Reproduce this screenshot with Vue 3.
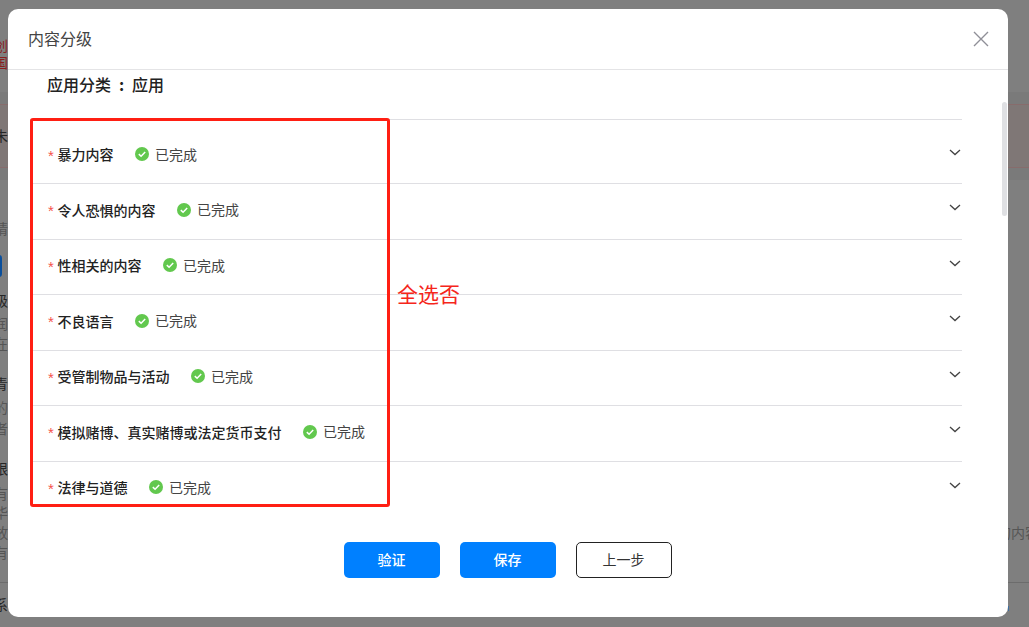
<script setup>
const rows = [
  '暴力内容',
  '令人恐惧的内容',
  '性相关的内容',
  '不良语言',
  '受管制物品与活动',
  '模拟赌博、真实赌博或法定货币支付',
  '法律与道德'
]
const leftBits = [
  { t: '业创', x: -20, y: 37, c: 'red' },
  { t: '国', x: -6, y: 54, c: 'red' },
  { t: '未', x: -6, y: 127, c: 'ink' },
  { t: '请', x: -6, y: 220, c: 'dim' },
  { t: '级', x: -6, y: 292, c: 'ink' },
  { t: '润', x: -6, y: 315, c: 'dim' },
  { t: '在', x: -6, y: 335, c: 'dim' },
  { t: '青', x: -6, y: 375, c: 'ink' },
  { t: '的', x: -6, y: 399, c: 'dim' },
  { t: '者', x: -6, y: 420, c: 'dim' },
  { t: '限', x: -6, y: 460, c: 'ink' },
  { t: '有', x: -6, y: 485, c: 'dim' },
  { t: '华', x: -6, y: 504, c: 'dim' },
  { t: '放', x: -6, y: 524, c: 'dim' },
  { t: '有', x: -6, y: 544, c: 'dim' },
  { t: '系', x: -6, y: 596, c: 'ink' }
]
</script>

<template>
  <div class="page">
    <div class="backdrop">
      <div class="band"></div>
      <div class="rule"></div>
      <span
        v-for="b in leftBits"
        :key="b.t + b.y"
        class="bit"
        :class="b.c"
        :style="{ left: b.x + 'px', top: b.y + 'px' }"
      >{{ b.t }}</span>
      <span class="chip"></span>
      <span class="bit dim right-bit">的内容</span>
      <span class="dots"></span>
    </div>

    <section class="modal">
      <header class="modal-head">
        <h2>内容分级</h2>
        <svg class="close" width="16" height="16" viewBox="0 0 16 16">
          <path d="M1 1 L15 15 M15 1 L1 15" stroke="#8f8f97" stroke-width="1.4" fill="none" />
        </svg>
      </header>

      <div class="modal-body">
        <div class="scroll">
          <p class="category">应用分类<span class="colon">:</span>应用</p>
          <ul class="list">
            <li v-for="(r, i) in rows" :key="r" class="row" :class="{ first: i === 0 }">
              <span class="star">*</span>
              <span class="label">{{ r }}</span>
              <svg class="ok" width="14" height="14" viewBox="0 0 14 14">
                <circle cx="7" cy="7" r="7" fill="#62c84e" />
                <path d="M3.8 7.1 L6.1 9.3 L10.2 5.1" stroke="#fff" stroke-width="1.5" fill="none" />
              </svg>
              <span class="done">已完成</span>
              <svg class="chev" width="12" height="7" viewBox="0 0 12 7">
                <path d="M1 1 L6 5.6 L11 1" stroke="#444" stroke-width="1.3" fill="none" />
              </svg>
            </li>
          </ul>
        </div>
        <div class="thumb"></div>
      </div>

      <footer class="modal-foot">
        <button class="btn primary">验证</button>
        <button class="btn primary">保存</button>
        <button class="btn ghost">上一步</button>
      </footer>
    </section>

    <div class="mark"></div>
    <span class="mark-text">全选否</span>
  </div>
</template>

<style>
html, body { margin: 0; padding: 0; background: #7f7f7f; }
</style>

<style scoped>
.page {
  position: relative;
  width: 1029px;
  height: 627px;
  overflow: hidden;
  font-family: "Noto Sans CJK SC", "Noto Sans", sans-serif;
  background: #7f7f7f;
}
.backdrop { position: absolute; inset: 0; }
.band {
  position: absolute;
  left: 0; right: 0; top: 92px; height: 88px;
  background: #7a7a7a;
}
.band::before {
  content: "";
  position: absolute;
  left: 0; right: 0; top: 12px; height: 62px;
  background: #7f7776;
  border-top: 1px solid #876c6c;
  border-bottom: 1px solid #876c6c;
}
.rule {
  position: absolute;
  left: 0; right: 0; top: 582px; height: 1px;
  background: #6c6c6c;
}
.bit { position: absolute; font-size: 14px; line-height: 14px; margin-top: 1px; white-space: nowrap; }
.red { color: #8a1f1f; }
.ink { color: #262626; }
.dim { color: #555; }
.chip {
  position: absolute;
  left: -6px; top: 255px;
  width: 8px; height: 22px;
  border-radius: 3px;
  background: #0a4f9c;
}
.right-bit { left: 997px; top: 524px; }
.dots {
  position: absolute;
  left: 1008px; top: 606px;
  width: 1px; height: 5px;
  background: #3f6f9f;
}

.modal {
  position: relative;
  margin: 9px 0 0 8px;
  width: 1000px;
  height: 608px;
  background: #fff;
  border-radius: 10px;
  display: flex;
  flex-direction: column;
  overflow: hidden;
}
.modal-head {
  height: 60px;
  flex: none;
  border-bottom: 1px solid #e4e4e6;
  display: flex;
  align-items: center;
  justify-content: space-between;
  padding: 0 19px 0 20px;
}
.modal-head h2 {
  margin: 0 0 2px;
  font-size: 16px;
  font-weight: 400;
  color: #444;
}
.close { display: block; }
.modal-body {
  position: relative;
  height: 434px;
  flex: none;
  overflow: hidden;
}
.scroll { padding: 0 46px 0 22px; }
.category {
  margin: 0;
  padding-left: 17px;
  height: 49px;
  line-height: 28px;
  font-size: 16px;
  font-weight: 500;
  color: #222;
}
.colon {
  display: inline-block;
  width: 21px;
  text-align: center;
  font-weight: 700;
}
.list { list-style: none; margin: 0; padding: 0; }
.row {
  height: 55.5px;
  box-sizing: border-box;
  border-top: 1px solid #dfdfe3;
  display: flex;
  align-items: center;
  padding-left: 18px;
  padding-bottom: 3px;
  position: relative;
}
.row.first { height: 64px; padding-top: 8px; padding-bottom: 3px; }
.star {
  color: #f5524a;
  font-family: "Liberation Sans", sans-serif;
  font-size: 15px;
  width: 9.5px;
  line-height: 16px;
  margin-top: 3px;
}
.label { font-weight: 500; color: #222; font-size: 14px; }
.ok { margin-left: 21.5px; flex: none; }
.done { margin: 0 0 1px 6px; color: #444; font-size: 14px; }
.chev { position: absolute; right: 1px; top: 20px; }
.row.first .chev { top: 29px; }
.thumb {
  position: absolute;
  right: 1px; top: 32px;
  width: 5px; height: 114px;
  border-radius: 3px;
  background: #dfe0e3;
}
.modal-foot {
  flex: 1;
  display: flex;
  justify-content: center;
  gap: 20px;
  padding-top: 38px;
}
.btn {
  width: 96px;
  height: 36px;
  box-sizing: border-box;
  border-radius: 5px;
  font-family: inherit;
  font-size: 14px;
  line-height: 20px;
  padding: 0 1px 2px 0;
}
.primary { background: #0080ff; border: 0; color: #fff; font-weight: 500; }
.ghost { background: #fff; border: 1px solid #222; color: #333; }

.mark {
  position: absolute;
  left: 30px; top: 118px;
  width: 360px; height: 389px;
  box-sizing: border-box;
  border: 3px solid #ff1f13;
  border-radius: 3px;
}
.mark-text {
  position: absolute;
  left: 397px; top: 278px;
  font-size: 21px;
  line-height: 30px;
  color: #f5261b;
}
</style>
